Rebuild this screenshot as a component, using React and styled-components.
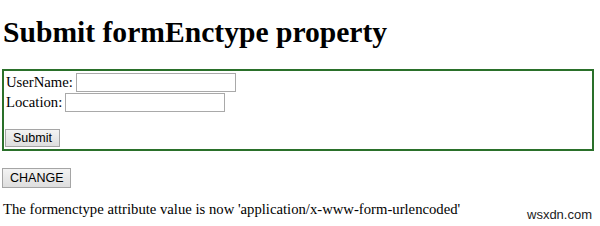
import React, { useState } from "react";
import styled, { createGlobalStyle } from "styled-components";

const GlobalStyle = createGlobalStyle`
  body {
    margin: 0;
    background: #fff;
    color: #000;
    font-family: "Liberation Serif", "Times New Roman", serif;
    font-size: 14.7px;
  }
`;

const Page = styled.div`
  position: relative;
  width: 600px;
  height: 226px;
  padding: 0 2px;
  box-sizing: border-box;
  overflow: hidden;
`;

const Title = styled.h1`
  margin: 0;
  padding: 15px 0 0 1px;
  height: 69px;
  box-sizing: border-box;
  font-size: 29.6px;
  font-weight: bold;
  line-height: 34px;
`;

const Form = styled.form`
  width: 592px;
  height: 82px;
  box-sizing: border-box;
  border: 2px solid #2a702a;
  padding: 2px;
  display: flex;
  flex-direction: column;
`;

const Row = styled.label`
  display: flex;
  align-items: center;
  height: 19px;
  line-height: 19px;
  margin-bottom: 1px;
`;

const Field = styled.input`
  width: 160px;
  height: 19px;
  box-sizing: border-box;
  margin-left: 3px;
  border: 1px solid #a9a9a9;
  padding: 0;
`;

const Button = styled.button`
  align-self: flex-start;
  height: ${(p) => p.$h}px;
  padding: 0 ${(p) => p.$pad}px;
  box-sizing: border-box;
  border: 1px solid #a5a5a5;
  border-radius: 0;
  background: linear-gradient(#f3f3f3, #dedede);
  font-family: "Liberation Sans", Arial, sans-serif;
  font-size: 12.5px;
  color: #000;
  margin: 0 0 0 ${(p) => p.$ml || 0}px;
`;

const Spacer = styled.div`
  height: 17px;
`;

const ChangeRow = styled.div`
  display: flex;
  padding-top: 17px;
  height: 20px;
`;

const Message = styled.p`
  margin: 0;
  padding-top: 13px;
  line-height: 17px;
  padding-left: 1px;
`;

const Watermark = styled.span`
  position: absolute;
  left: 525px;
  top: 207px;
  font-family: "Liberation Sans", Arial, sans-serif;
  font-size: 13px;
  color: #222;
  background: #fff;
  padding: 0 2px;
`;

export default function App() {
  const [enc, setEnc] = useState("application/x-www-form-urlencoded");
  return (
    <Page>
      <GlobalStyle />
      <Title>Submit formEnctype property</Title>
      <Form onSubmit={(e) => e.preventDefault()}>
        <Row>
          UserName:
          <Field type="text" />
        </Row>
        <Row>
          Location:
          <Field type="text" />
        </Row>
        <Spacer />
        <Button type="submit" $h={19} $pad={7} $ml={-1}>
          Submit
        </Button>
      </Form>
      <ChangeRow>
        <Button
          type="button"
          $h={20}
          $pad={7}
          onClick={() => setEnc("application/x-www-form-urlencoded")}
        >
          CHANGE
        </Button>
      </ChangeRow>
      <Message>The formenctype attribute value is now '{enc}'</Message>
      <Watermark>wsxdn.com</Watermark>
    </Page>
  );
}
